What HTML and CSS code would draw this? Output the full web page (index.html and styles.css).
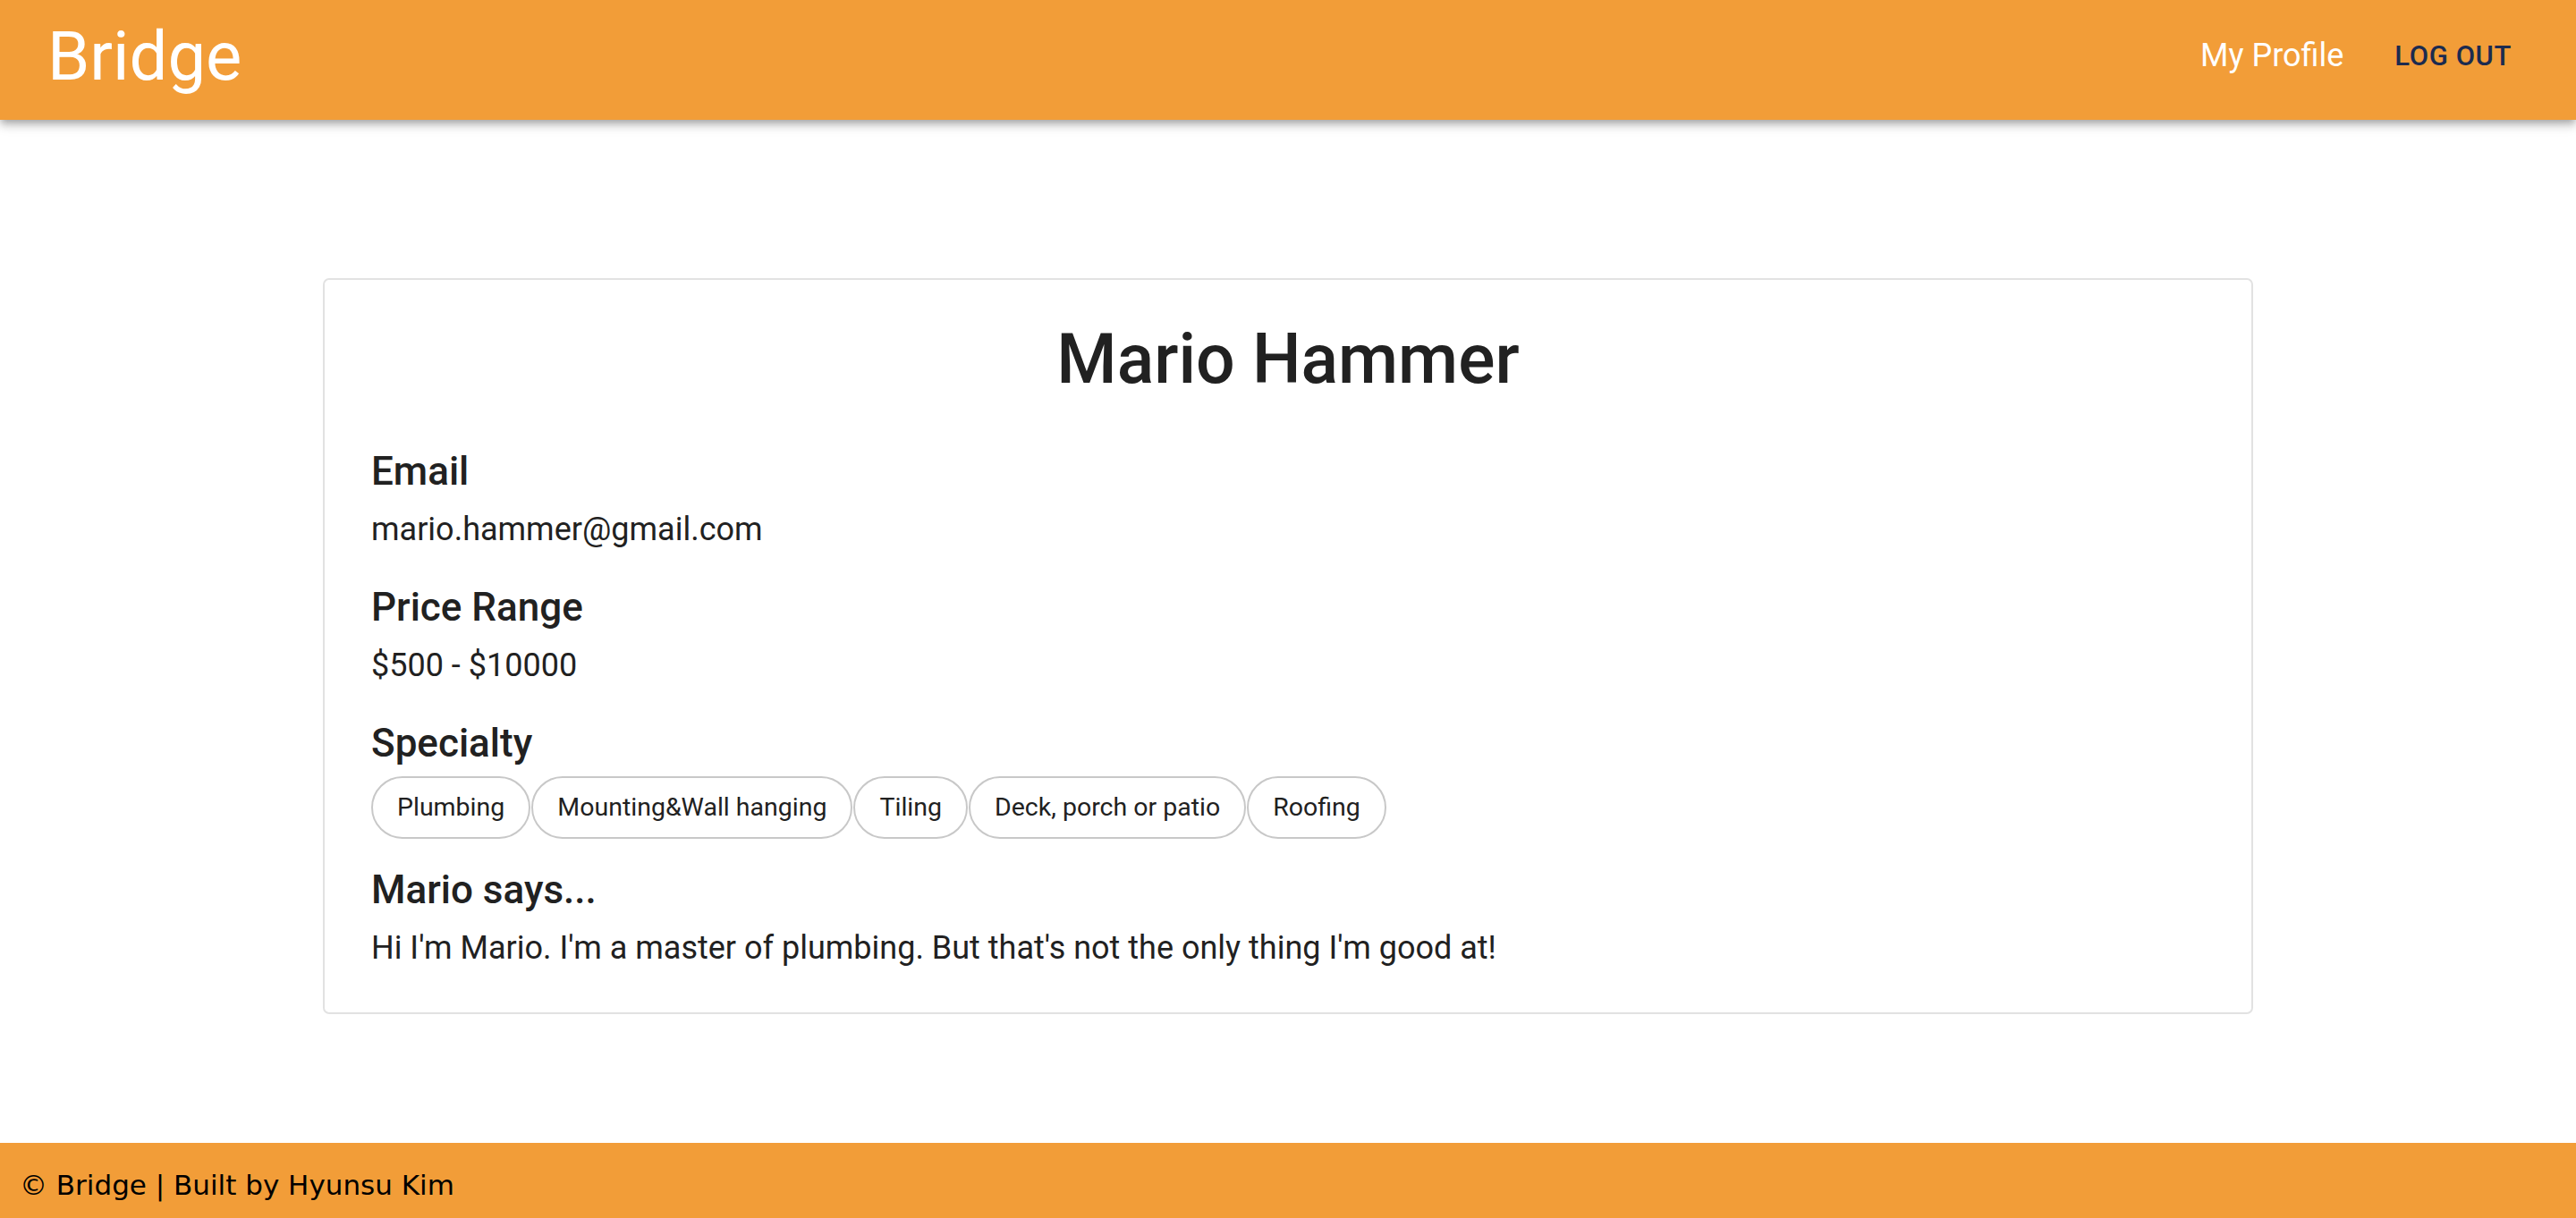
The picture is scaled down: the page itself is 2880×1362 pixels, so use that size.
FILE: index.html
```html
<!DOCTYPE html>
<html lang="en">
<head>
<meta charset="utf-8">
<title>Bridge</title>
<link rel="stylesheet" href="styles.css">
</head>
<body>
<div class="page">
  <header class="appbar">
    <div class="logo">Bridge</div>
    <nav class="nav">
      <a class="nav-link" href="#">My Profile</a>
      <button class="nav-btn" type="button">Log out</button>
    </nav>
  </header>
  <main class="main">
    <section class="card">
      <h1 class="name">Mario Hammer</h1>
      <div class="section">
        <h2 class="label">Email</h2>
        <p class="value">mario.hammer@gmail.com</p>
      </div>
      <div class="section">
        <h2 class="label">Price Range</h2>
        <p class="value">$500 - $10000</p>
      </div>
      <div class="section">
        <h2 class="label">Specialty</h2>
        <div class="chips">
          <span class="chip">Plumbing</span>
          <span class="chip">Mounting&amp;Wall hanging</span>
          <span class="chip">Tiling</span>
          <span class="chip">Deck, porch or patio</span>
          <span class="chip">Roofing</span>
        </div>
      </div>
      <div class="section section-after-chips">
        <h2 class="label">Mario says...</h2>
        <p class="value">Hi I'm Mario. I'm a master of plumbing. But that's not the only thing I'm good at!</p>
      </div>
    </section>
  </main>
  <footer class="footer">© Bridge | Built by Hyunsu Kim</footer>
</div>
</body>
</html>
```
FILE: styles.css
```css
* { box-sizing: border-box; }
html, body { margin: 0; padding: 0; }
body {
  font-family: Roboto, "Liberation Sans", Arial, sans-serif;
  color: #212121;
  background: #ffffff;
}
.page {
  min-height: 100vh;
  display: flex;
  flex-direction: column;
}
.appbar {
  height: 134px;
  background: #f29d38;
  display: flex;
  align-items: center;
  justify-content: space-between;
  padding: 0 44px 8px 53px;
  box-shadow: 0 4px 7px -2px rgba(0,0,0,0.2), 0 7px 9px 0 rgba(0,0,0,0.14), 0 2px 18px 0 rgba(0,0,0,0.12);
  position: relative;
  z-index: 2;
}
.logo {
  font-size: 76px;
  line-height: 1;
  color: #ffffff;
  font-weight: 400;
}
.nav {
  display: flex;
  align-items: center;
}
.nav-link {
  font-size: 36px;
  color: #ffffff;
  text-decoration: none;
  padding: 0 29px;
  line-height: 1.2;
}
.nav-btn {
  font-family: Roboto, "Liberation Sans", Arial, sans-serif;
  font-size: 31px;
  font-weight: 500;
  text-transform: uppercase;
  letter-spacing: 0.6px;
  color: #1c2b4f;
  background: transparent;
  border: 0;
  padding: 0 28px;
  line-height: 1.2;
  cursor: pointer;
}
.main {
  flex: 1;
  padding-top: 177px;
  padding-bottom: 40px;
  display: flex;
  justify-content: center;
  align-items: flex-start;
}
.card {
  width: 2158px;
  border: 2px solid #e2e2e2;
  border-radius: 7px;
  background: #ffffff;
  padding: 43px 52px 51px 52px;
}
.name {
  margin: 0;
  text-align: center;
  font-size: 77px;
  line-height: 92px;
  font-weight: 500;
  color: #212121;
}
.section { margin-top: 39px; }
.name + .section { margin-top: 52px; }
.section-after-chips { margin-top: 30px; }
.label {
  margin: 0;
  font-size: 44px;
  line-height: 54px;
  font-weight: 500;
  color: #212121;
}
.value {
  margin: 17px 0 0 0;
  font-size: 36px;
  line-height: 42px;
  font-weight: 400;
  color: #212121;
}
.chips {
  margin-top: 10px;
  display: flex;
  flex-wrap: wrap;
  gap: 1px;
}
.chip {
  height: 70px;
  line-height: 66px;
  border: 2px solid #c8c8c8;
  border-radius: 35px;
  padding: 0 27px;
  font-size: 28.5px;
  color: #212121;
  white-space: nowrap;
}
.footer {
  height: 84px;
  background: #f29d38;
  display: flex;
  align-items: center;
  padding: 10px 0 0 22px;
  font-family: "DejaVu Sans", Verdana, sans-serif;
  font-size: 31px;
  color: #000000;
}
```
